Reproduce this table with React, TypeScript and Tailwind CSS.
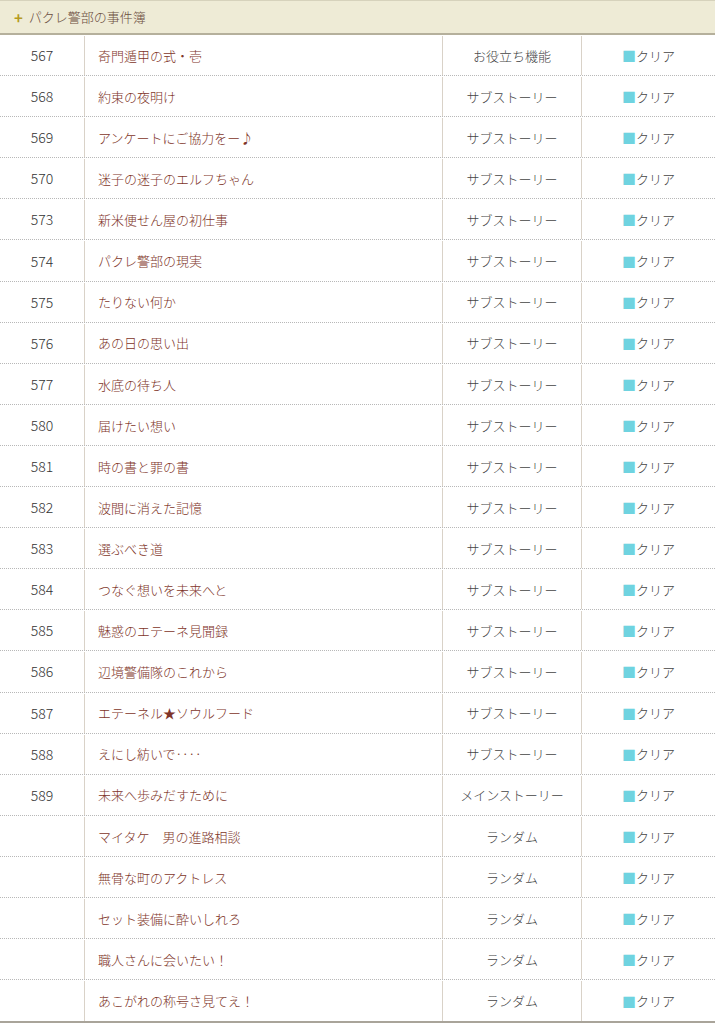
const rows: [string, string, string][] = [
  ["567", "奇門遁甲の式・壱", "お役立ち機能"],
  ["568", "約束の夜明け", "サブストーリー"],
  ["569", "アンケートにご協力をー♪", "サブストーリー"],
  ["570", "迷子の迷子のエルフちゃん", "サブストーリー"],
  ["573", "新米便せん屋の初仕事", "サブストーリー"],
  ["574", "パクレ警部の現実", "サブストーリー"],
  ["575", "たりない何か", "サブストーリー"],
  ["576", "あの日の思い出", "サブストーリー"],
  ["577", "水底の待ち人", "サブストーリー"],
  ["580", "届けたい想い", "サブストーリー"],
  ["581", "時の書と罪の書", "サブストーリー"],
  ["582", "波間に消えた記憶", "サブストーリー"],
  ["583", "選ぶべき道", "サブストーリー"],
  ["584", "つなぐ想いを未来へと", "サブストーリー"],
  ["585", "魅惑のエテーネ見聞録", "サブストーリー"],
  ["586", "辺境警備隊のこれから", "サブストーリー"],
  ["587", "エテーネル★ソウルフード", "サブストーリー"],
  ["588", "えにし紡いで‥‥", "サブストーリー"],
  ["589", "未来へ歩みだすために", "メインストーリー"],
  ["", "マイタケ　男の進路相談", "ランダム"],
  ["", "無骨な町のアクトレス", "ランダム"],
  ["", "セット装備に酔いしれろ", "ランダム"],
  ["", "職人さんに会いたい！", "ランダム"],
  ["", "あこがれの称号さ見てえ！", "ランダム"],
];

export default function App() {
  return (
    <div className="w-[715px] bg-white font-['Noto_Sans_CJK_JP','Liberation_Sans',sans-serif] text-[13px] font-light">
      <div className="h-[35px] bg-[#eeebd6] border-t border-[#d6d2bc] border-b-[2px] border-b-[#b5b09c] flex items-center pl-[14px] gap-[6px]">
        <span className="text-[#b59a22] text-[15px] font-bold leading-none">+</span>
        <span className="text-[#6b4d3e] text-[13px]">パクレ警部の事件簿</span>
      </div>
      <div className="border-b-[2px] border-[#a9a49a]">
        {rows.map(([no, title, kind], i) => (
          <div
            key={i}
            className={`flex h-[41.1px] pt-[1px] ${i < rows.length - 1 ? "border-b border-dotted border-[#b8b8b8]" : ""}`}
          >
            <div className="w-[85px] shrink-0 flex items-center justify-center text-[14px] text-[#333] border-r border-[#d9d2c8]">
              {no}
            </div>
            <div className="w-[358px] shrink-0 flex items-center pl-[13px] text-[#7e3428] border-r border-[#d9d2c8]">
              {title}
            </div>
            <div className="w-[139px] shrink-0 flex items-center justify-center text-[#444] border-r border-[#d9d2c8]">
              {kind}
            </div>
            <div className="flex-1 flex items-center justify-center text-[#444]">
              <span className="text-[#6fd3e0] text-[14px]">■</span>
              <span>クリア</span>
            </div>
          </div>
        ))}
      </div>
    </div>
  );
}
